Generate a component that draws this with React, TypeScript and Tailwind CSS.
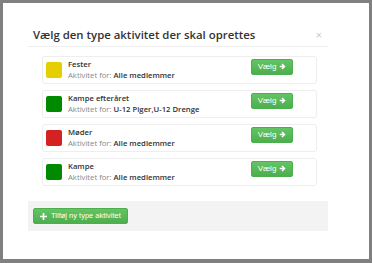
import React from 'react';

interface ActivityType {
  name: string;
  color: string;
  audience: string;
}

const types: ActivityType[] = [
  { name: 'Fester', color: 'bg-[#e5cf00]', audience: 'Alle medlemmer' },
  { name: 'Kampe efteråret', color: 'bg-[#008a00]', audience: 'U-12 Piger,U-12 Drenge' },
  { name: 'Møder', color: 'bg-[#d42222]', audience: 'Alle medlemmer' },
  { name: 'Kampe', color: 'bg-[#008a00]', audience: 'Alle medlemmer' },
];

function ArrowRight() {
  return (
    <svg width="7" height="7" viewBox="0 0 10 10" className="ml-[3px]">
      <path d="M1 4h4.5L3.5 2 5 0.6 9.4 5 5 9.4 3.5 8 5.5 6H1z" fill="white" />
    </svg>
  );
}

function Plus() {
  return (
    <svg width="7" height="7" viewBox="0 0 10 10" className="mr-[4px]">
      <path d="M3.8 0h2.4v3.8H10v2.4H6.2V10H3.8V6.2H0V3.8h3.8z" fill="white" />
    </svg>
  );
}

function App() {
  return (
    <div
      className="w-[372px] h-[263px] bg-[#808080] pt-[3px] pl-[3px] pr-[3px] pb-[4px]"
      style={{ fontFamily: '"Open Sans", sans-serif' }}
    >
      <div className="w-full h-full bg-white pl-[25px] pt-[21px]">
        <div className="w-[300px]">
          <div className="flex items-center justify-between h-[23px] pl-[5px] pr-[6px] border-b border-[#eeeeee]">
            <h4 className="text-[11.4px] font-semibold text-[#333333] leading-none -mt-[1px]">
              Vælg den type aktivitet der skal oprettes
            </h4>
            <span className="text-[11px] text-[#c8c8c8] leading-none -mt-[2px]">×</span>
          </div>
          <div className="pl-[14px] pr-[11px] pt-[9px] pb-[15px] flex flex-col gap-[6px]">
            {types.map((t) => (
              <div
                key={t.name}
                className="h-[28px] flex items-center border border-[#eeeeee] rounded-[3px] pl-[3px] pr-[23px]"
              >
                <div className={`w-[16px] h-[16px] rounded-[2px] ${t.color}`} />
                <div className="ml-[6px] flex-1 text-[7.7px] leading-[11px] text-[#333333]">
                  <div className="font-semibold">{t.name}</div>
                  <div>
                    <span className="text-[#888888]">Aktivitet for: </span>
                    <span className="font-semibold">{t.audience}</span>
                  </div>
                </div>
                <button
                  className="w-[42px] h-[16px] -mt-[7px] flex items-center justify-center rounded-[2px] bg-gradient-to-b from-[#62c462] to-[#4cae4c] border border-[#4cae4c] text-white text-[8px] leading-none"
                  style={{ fontFamily: '"Liberation Sans", Arial, sans-serif' }}
                >
                  Vælg
                  <ArrowRight />
                </button>
              </div>
            ))}
          </div>
          <div className="bg-[#f3f3f3] h-[30px] flex items-center pl-[5px]">
            <button
              className="h-[16px] px-[6px] flex items-center rounded-[2px] bg-gradient-to-b from-[#62c462] to-[#4cae4c] border border-[#4cae4c] text-white text-[7.5px] leading-none"
              style={{ fontFamily: '"Liberation Sans", Arial, sans-serif' }}
            >
              <Plus />
              Tilføj ny type aktivitet
            </button>
          </div>
        </div>
      </div>
    </div>
  );
}

export default App;
